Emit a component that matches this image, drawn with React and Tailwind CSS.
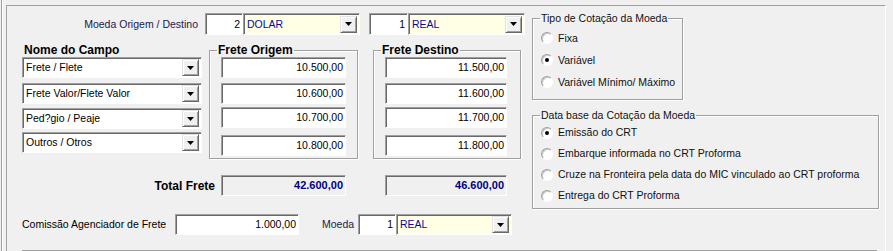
import React from 'react'

const sunken =
  'border border-t-[#a0a0a0] border-l-[#a0a0a0] border-r-white border-b-white shadow-[inset_1px_1px_0_#696969]'

const DropBtn = () => (
  <div className="w-[17px] h-[17px] shrink-0 bg-[#f0f0f0] border border-t-[#e3e3e3] border-l-[#e3e3e3] border-r-[#696969] border-b-[#696969] shadow-[inset_1px_1px_0_#ffffff,inset_-1px_-1px_0_#a0a0a0] flex items-center justify-center">
    <svg width="7" height="4" viewBox="0 0 7 4">
      <path d="M0 0h7L3.5 4z" fill="#000" />
    </svg>
  </div>
)

const Combo = ({ text, yellow, className = '' }) => (
  <div
    className={`${sunken} flex items-center justify-between pr-[2px] ${
      yellow ? 'bg-[#ffffe6] text-[#0a0a96]' : 'bg-white text-black'
    } ${className}`}
  >
    <span className="pl-[3px]">{text}</span>
    <DropBtn />
  </div>
)

const Field = ({ value, className = '' }) => (
  <div className={`${sunken} flex items-center justify-end pr-[2px] ${className}`}>{value}</div>
)

const Radio = ({ label, checked, className = '' }) => (
  <div className={`flex items-center ${className}`}>
    <div className="w-[12px] h-[12px] shrink-0 rounded-full bg-white border border-t-[#a0a0a0] border-l-[#a0a0a0] border-r-white border-b-white shadow-[inset_1px_1px_0_#c8c8c8] flex items-center justify-center">
      {checked && <div className="w-[4px] h-[4px] rounded-full bg-black" />}
    </div>
    <span className="ml-[5px] text-[#111]">{label}</span>
  </div>
)

const groupBox = 'border border-[#a0a0a0] shadow-[1px_1px_0_#ffffff,inset_1px_1px_0_#ffffff] m-0 min-w-0'

const campos = ['Frete / Flete', 'Frete Valor/Flete Valor', 'Ped?gio / Peaje', 'Outros / Otros']
const origem = ['10.500,00', '10.600,00', '10.700,00', '10.800,00']
const destino = ['11.500,00', '11.600,00', '11.700,00', '11.800,00']
const gaps = ['mt-0', 'mt-[5px]', 'mt-[3px]', 'mt-[7px]']
const comboGaps = ['mt-0', 'mt-[5px]', 'mt-[4px]', 'mt-[3px]']

const FreteBox = ({ title, values, width, inputWidth, className = '' }) => (
  <fieldset className={`${groupBox} ${width} pl-[7px] pb-[2px] ${className}`}>
    <legend className="px-px text-[12px] leading-[14px] font-bold">{title}</legend>
    {values.map((v, i) => (
      <Field key={v} value={v} className={`bg-white h-[21px] ml-[4px] ${inputWidth} ${gaps[i]}`} />
    ))}
  </fieldset>
)

const App = () => {
  return (
    <div className="w-[893px] h-[251px] bg-[#f0f0f0] overflow-hidden flex font-['Liberation_Sans',Arial,sans-serif] text-[10.5px] leading-none text-black">
      <div className="ml-px w-px bg-[#a0a0a0]" />
      <div className="w-px bg-white" />
      <div className="w-[3px]" />
      <div className="mt-[5px] w-[880px] h-[246px] border-t border-l border-[#a0a0a0] border-r border-r-white flex flex-col">
        <div className="flex">
          {/* left column */}
          <div className="ml-[15px] mt-[7px] w-[503px] flex flex-col">
            <div className="flex items-center h-[22px]">
              <div className="w-[176px] mr-[7px] text-right text-[#20204a]">Moeda Origem / Destino</div>
              <Field value="2" className="bg-white w-[38px] h-[22px]" />
              <Combo text="DOLAR" yellow className="w-[117px] h-[22px]" />
              <Field value="1" className="bg-white w-[39px] h-[22px] ml-[9px]" />
              <Combo text="REAL" yellow className="w-[117px] h-[22px]" />
            </div>

            <div className="flex mt-[8px]">
              <div className="w-[180px] flex flex-col">
                <div className="h-[14px] pl-[2px] text-[12px] leading-[14px] font-bold">Nome do Campo</div>
                {campos.map((c, i) => (
                  <Combo key={c} text={c} className={`h-[21px] ${comboGaps[i]}`} />
                ))}
              </div>
              <FreteBox title="Frete Origem" values={origem} width="w-[149px]" inputWidth="w-[125px]" className="ml-[7px]" />
              <FreteBox title="Frete Destino" values={destino} width="w-[148px]" inputWidth="w-[122px]" className="ml-[15px]" />
            </div>

            <div className="flex items-center h-[21px] mt-[16px]">
              <div className="w-[193px] text-right text-[12px] font-bold">Total Frete</div>
              <Field value="42.600,00" className="ml-[6px] w-[125px] h-[21px] bg-[#f0f0f0] font-bold text-[11px] text-[#000080]" />
              <Field value="46.600,00" className="ml-[39px] w-[122px] h-[21px] bg-[#f0f0f0] font-bold text-[11px] text-[#000080]" />
            </div>

            <div className="flex items-center h-[21px] mt-[18px]">
              <div className="w-[153px]">Comissão Agenciador de Frete</div>
              <Field value="1.000,00" className="bg-white w-[124px] h-[21px]" />
              <div className="ml-[23px] w-[36px] text-[#20204a]">Moeda</div>
              <Field value="1" className="bg-white w-[38px] h-[21px]" />
              <Combo text="REAL" yellow className="w-[116px] h-[21px]" />
            </div>
          </div>

          {/* right column */}
          <div className="ml-[7px] mt-[6px] flex flex-col">
            <fieldset className={`${groupBox} w-[151px] h-[88px] pl-[7px]`}>
              <legend className="px-px leading-[13px] text-[#111]">Tipo de Cotação da Moeda</legend>
              <div className="mt-[2px] ml-px">
                <Radio label="Fixa" className="h-[22px]" />
                <Radio label="Variável" checked className="h-[22px]" />
                <Radio label="Variável Mínimo/ Máximo" className="h-[22px]" />
              </div>
            </fieldset>
            <fieldset className={`${groupBox} w-[347px] h-[100px] mt-[9px] pl-[7px]`}>
              <legend className="px-px leading-[13px] text-[#111]">Data base da Cotação da Moeda</legend>
              <div className="ml-px">
                <Radio label="Emissão do CRT" checked className="h-[21px]" />
                <Radio label="Embarque informada no CRT Proforma" className="h-[21px]" />
                <Radio label="Cruze na Fronteira pela data do MIC vinculado ao CRT proforma" className="h-[21px]" />
                <Radio label="Entrega do CRT Proforma" className="h-[21px]" />
              </div>
            </fieldset>
          </div>
        </div>
        <div className="mt-auto ml-[15px] w-[855px] h-px bg-[#a0a0a0]" />
      </div>
    </div>
  )
}

export default App
